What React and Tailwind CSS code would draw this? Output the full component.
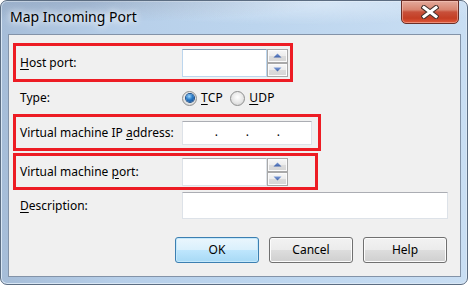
import React from "react";

function UpTri({ down }) {
  return (
    <svg width="9" height="5" viewBox="0 0 9 5">
      <defs>
        <linearGradient id={down ? "gd" : "gu"} x1="0" y1="0" x2="0" y2="1">
          <stop offset="0" stopColor="#7a9ad6" />
          <stop offset="1" stopColor="#3c5fa8" />
        </linearGradient>
      </defs>
      {down ? (
        <polygon points="0.5,0.5 8.5,0.5 4.5,4.5" fill={`url(#gd)`} />
      ) : (
        <polygon points="4.5,0.5 8.5,4.5 0.5,4.5" fill={`url(#gu)`} />
      )}
    </svg>
  );
}

function SpinBtn({ down }) {
  return (
    <div className="flex h-[14px] w-[21px] items-center justify-center border border-[#a9a9a9] bg-[linear-gradient(180deg,#f7f7f7_0%,#ececec_50%,#dcdcdc_51%,#d6d6d6_100%)] shadow-[inset_0_0_0_1px_#fbfbfb]">
      <UpTri down={down} />
    </div>
  );
}

function Spinner({ focus }) {
  return (
    <div className="flex h-[28px] w-[106px]">
      <div
        className={
          focus
            ? "flex-1 bg-white border border-[#bcd6ee] border-t-[#8497ad]"
            : "flex-1 bg-white border border-[#dde2e8] border-t-[#abadb3]"
        }
      />
      <div className="flex flex-col">
        <SpinBtn />
        <SpinBtn down />
      </div>
    </div>
  );
}

function Label({ children }) {
  return (
    <div className="w-[162px] shrink-0 text-[12px] leading-[16px] text-black">
      {children}
    </div>
  );
}

function Radio({ checked }) {
  return (
    <div className="flex h-[15px] w-[15px] items-center justify-center rounded-full border border-[#8e8f8f] bg-[radial-gradient(circle_at_50%_40%,#ffffff_0%,#e6e6e6_55%,#c9c9c9_100%)]">
      {checked ? (
        <div className="h-[8px] w-[8px] rounded-full bg-[radial-gradient(circle_at_40%_30%,#9bd6ff_0%,#2c7cc8_45%,#0c3f82_100%)] shadow-[0_0_0_1px_#1a4f8a]" />
      ) : null}
    </div>
  );
}

function Btn({ children, def }) {
  return (
    <div
      className={
        def
          ? "flex h-[26px] w-[84px] items-center justify-center rounded-[3px] border border-[#3c7fb1] bg-[linear-gradient(180deg,#eaf6fd_0%,#d9f0fc_50%,#bee6fd_51%,#a7d9f5_100%)] text-[12px] text-black shadow-[inset_0_0_0_1px_#c4e8fb]"
          : "flex h-[26px] w-[84px] items-center justify-center rounded-[3px] border border-[#707070] bg-[linear-gradient(180deg,#f2f2f2_0%,#ebebeb_50%,#dddddd_51%,#cfcfcf_100%)] text-[12px] text-black shadow-[inset_0_0_0_1px_#fcfcfc]"
      }
    >
      {children}
    </div>
  );
}

export default function App() {
  return (
    <div className="h-[285px] w-[468px] bg-white font-['Noto_Sans',sans-serif]">
      <div className="relative flex h-[285px] w-[468px] flex-col rounded-[7px] border border-[#5c6d82] bg-[linear-gradient(90deg,#a6bdd8_0%,#b7cfe9_25%,#bcd5ee_55%,#c9def3_100%)] pb-[7px] pl-[7px] pr-[6px] shadow-[inset_0_0_0_1px_#d9e7f5]">
        {/* glass blur overlay */}
        <div className="pointer-events-none absolute left-0 top-0 h-[33px] w-full rounded-t-[7px] bg-[radial-gradient(ellipse_at_18%_0%,rgba(120,135,160,0.35)_0%,rgba(120,135,160,0)_45%),radial-gradient(ellipse_at_65%_10%,rgba(230,240,250,0.6)_0%,rgba(230,240,250,0)_50%)]" />
        {/* title bar */}
        <div className="relative flex h-[33px] items-center pl-[2px] pb-[1px]">
          <span className="text-[14px] leading-[18px] text-black [text-shadow:0_0_6px_#ffffff,0_0_10px_#ffffff]">
            Map Incoming Port
          </span>
        </div>
        {/* close button */}
        <div className="absolute right-[8px] top-[-1px] flex h-[24px] w-[58px] items-center justify-center rounded-b-[5px] border border-[#6a2e26] bg-[linear-gradient(180deg,#e3aa9c_0%,#d8846f_40%,#c8503a_50%,#c43e24_78%,#e0583a_100%)] shadow-[inset_0_0_0_1px_rgba(255,210,200,0.45)]">
          <svg width="18" height="14" viewBox="0 0 18 14">
            <path d="M3 2.5 L15 11.5 M15 2.5 L3 11.5" stroke="#43302c" strokeWidth="5" strokeLinecap="square" />
            <path d="M3 2.5 L15 11.5 M15 2.5 L3 11.5" stroke="#ffffff" strokeWidth="3" strokeLinecap="square" />
          </svg>
        </div>
        {/* client area */}
        <div className="flex h-[243px] w-[453px] flex-col border border-[#8393a8] bg-[#f0f0f0]">
          {/* Host port box */}
          <div className="ml-[4px] mt-[8px] flex h-[39px] w-[280px] items-center border-[3px] border-[#ed1c24] pl-[4px]">
            <Label>
              <span className="underline underline-offset-2">H</span>ost port:
            </Label>
            <Spinner focus />
          </div>
          {/* Type */}
          <div className="flex h-[32px] items-center pl-[11px]">
            <Label>Type:</Label>
            <div className="flex items-center text-[12px] text-black">
              <Radio checked />
              <span className="ml-[4px] tracking-[0.3px]">
                <span className="underline underline-offset-2">T</span>CP
              </span>
              <div className="ml-[7px]">
                <Radio />
              </div>
              <span className="ml-[4px] tracking-[0.3px]">
                <span className="underline underline-offset-2">U</span>DP
              </span>
            </div>
          </div>
          {/* IP box */}
          <div className="ml-[4px] flex h-[37px] w-[308px] items-center border-[3px] border-[#ed1c24] pl-[4px]">
            <Label>
              Virtual machine IP <span className="underline underline-offset-2">a</span>ddress:
            </Label>
            <div className="flex h-[24px] w-[130px] items-center border border-[#dde2e8] border-t-[#abadb3] bg-white pb-[2px] text-[12px] text-black">
              <span className="w-[35px] text-right">.</span>
              <span className="w-[31px] text-right">.</span>
              <span className="w-[31px] text-right">.</span>
            </div>
          </div>
          {/* VM port box */}
          <div className="ml-[4px] mt-[2px] flex h-[37px] w-[305px] items-center border-[3px] border-[#ed1c24] pl-[4px]">
            <Label>
              Virtual machine <span className="underline underline-offset-2">p</span>ort:
            </Label>
            <Spinner />
          </div>
          {/* Description */}
          <div className="mt-[2px] flex h-[27px] items-center pl-[11px]">
            <Label>
              <span className="underline underline-offset-2">D</span>escription:
            </Label>
            <div className="h-[27px] w-[266px] border border-[#dde2e8] border-t-[#abadb3] bg-white" />
          </div>
          {/* buttons */}
          <div className="mt-[18px] flex justify-end gap-[10px] pr-[13px]">
            <Btn def>OK</Btn>
            <Btn>Cancel</Btn>
            <Btn>Help</Btn>
          </div>
        </div>
      </div>
    </div>
  );
}
